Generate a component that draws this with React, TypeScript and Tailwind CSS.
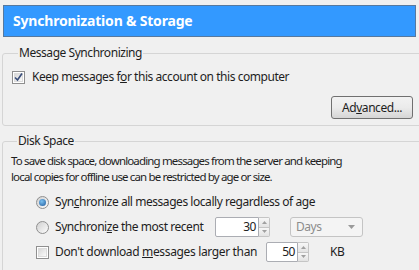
import React from "react";

const font = { fontFamily: '"Noto Sans", "Open Sans", sans-serif' };

function Checkbox({ checked }: { checked?: boolean }) {
  return (
    <span className="w-[13px] h-[13px] border border-[#8f8f8f] bg-white flex items-center justify-center shrink-0">
      <span className="w-[9px] h-[9px] border border-[#dcdcdc] bg-gradient-to-br from-[#d8d8d8] to-[#fafafa] flex items-center justify-center">
        {checked && (
          <svg width="9" height="9" viewBox="0 0 9 9" className="overflow-visible">
            <path d="M1 4.5 L3.5 7 L8 0.5" fill="none" stroke="#3a4e7a" strokeWidth="1.6" />
          </svg>
        )}
      </span>
    </span>
  );
}

function Radio({ checked }: { checked?: boolean }) {
  return (
    <span className="w-[13px] h-[13px] rounded-full border border-[#8f8f8f] bg-gradient-to-br from-[#d0d0d0] to-[#fcfcfc] flex items-center justify-center shrink-0">
      {checked && (
        <span className="w-[7px] h-[7px] rounded-full bg-[radial-gradient(circle_at_40%_35%,#7ac0f0,#1f5a9c)]" />
      )}
    </span>
  );
}

function Spin({ value, width }: { value: string; width: string }) {
  return (
    <div className="flex items-stretch h-[20px] shrink-0">
      <div className={`${width} border border-[#abadb3] rounded-l-[2px] bg-white flex items-center justify-end pr-[2px] text-[#222]`}>
        {value}
      </div>
      <div className="w-[11px] flex flex-col border border-l-0 border-[#c5c5c5] rounded-r-[2px]">
        <div className="flex-1 flex items-center justify-center bg-gradient-to-b from-[#f7f7f7] to-[#e3e3e3] border-b border-[#c5c5c5]">
          <svg width="5" height="3" viewBox="0 0 5 3"><path d="M0 3 L2.5 0 L5 3Z" fill="#a0a0a0" /></svg>
        </div>
        <div className="flex-1 flex items-center justify-center bg-gradient-to-b from-[#f7f7f7] to-[#e3e3e3]">
          <svg width="5" height="3" viewBox="0 0 5 3"><path d="M0 0 L2.5 3 L5 0Z" fill="#a0a0a0" /></svg>
        </div>
      </div>
    </div>
  );
}

export default function App() {
  return (
    <div className="w-[419px] h-[270px] bg-[#f0f0f0] overflow-hidden text-[12px] tracking-[-0.45px] text-[#1e1e1e] leading-[16px]" style={font}>
      <div className="mx-[3px] mt-[5px] h-[32px] bg-[#3399ff] border border-[#56799f] flex items-center pl-[9px] text-white font-bold text-[14px] tracking-[-0.2px]">
        Synchronization &amp; Storage
      </div>
      <fieldset className="ml-[2px] w-[420px] mt-[8px] h-[81px] border border-[#d5d5d5] rounded-[3px] pl-[9px] pr-[8px]">
        <legend className="ml-[6px] px-[1px] text-[#1e1e1e]">Message Synchronizing</legend>
        <div className="flex items-center gap-[7px] mt-[8px]">
          <Checkbox checked />
          <span className="whitespace-nowrap">Keep messages f<u>o</u>r this account on this computer</span>
        </div>
        <div className="flex justify-end mt-[11px]">
          <button className="w-[82px] h-[23px] border border-[#707070] rounded-[3px] bg-gradient-to-b from-[#f2f2f2] via-[#ebebeb] to-[#d5d5d5] text-[#1e1e1e] flex items-center justify-center">
            Ad<u>v</u>anced...
          </button>
        </div>
      </fieldset>
      <fieldset className="ml-[2px] w-[420px] mt-[7px] h-[200px] border border-[#d5d5d5] rounded-[3px] pl-[8px]">
        <legend className="ml-[6px] px-[1px]">Disk Space</legend>
        <p className="mt-[4px] whitespace-nowrap text-[11.5px] tracking-[-0.85px]">
          To save disk space, downloading messages from the server and keeping
          <br />
          local copies for offline use can be restricted by age or size.
        </p>
        <div className="pl-[25px] mt-[7px] flex flex-col gap-[5px]">
          <div className="flex items-center gap-[6px] h-[20px]">
            <Radio checked />
            <span className="whitespace-nowrap">Syn<u>c</u>hronize all messages locally regardless of age</span>
          </div>
          <div className="flex items-center gap-[6px] h-[20px]">
            <Radio />
            <span className="w-[154px] whitespace-nowrap">Synchroni<u>z</u>e the most recent</span>
            <Spin value="30" width="w-[44px]" />
            <div className="ml-[14px] w-[73px] h-[20px] border border-[#c4c4c4] rounded-[3px] bg-[#f4f4f4] flex items-center justify-between pl-[5px] pr-[7px] text-[#8c8c8c]">
              Days
              <svg width="7" height="4" viewBox="0 0 7 4"><path d="M0 0 L3.5 4 L7 0Z" fill="#9a9a9a" /></svg>
            </div>
          </div>
          <div className="flex items-center gap-[6px] h-[20px]">
            <Checkbox />
            <span className="w-[205px] whitespace-nowrap tracking-[-0.35px]">Don't download <u>m</u>essages larger than</span>
            <Spin value="50" width="w-[32px]" />
            <span className="ml-[15px]">KB</span>
          </div>
        </div>
      </fieldset>
    </div>
  );
}
